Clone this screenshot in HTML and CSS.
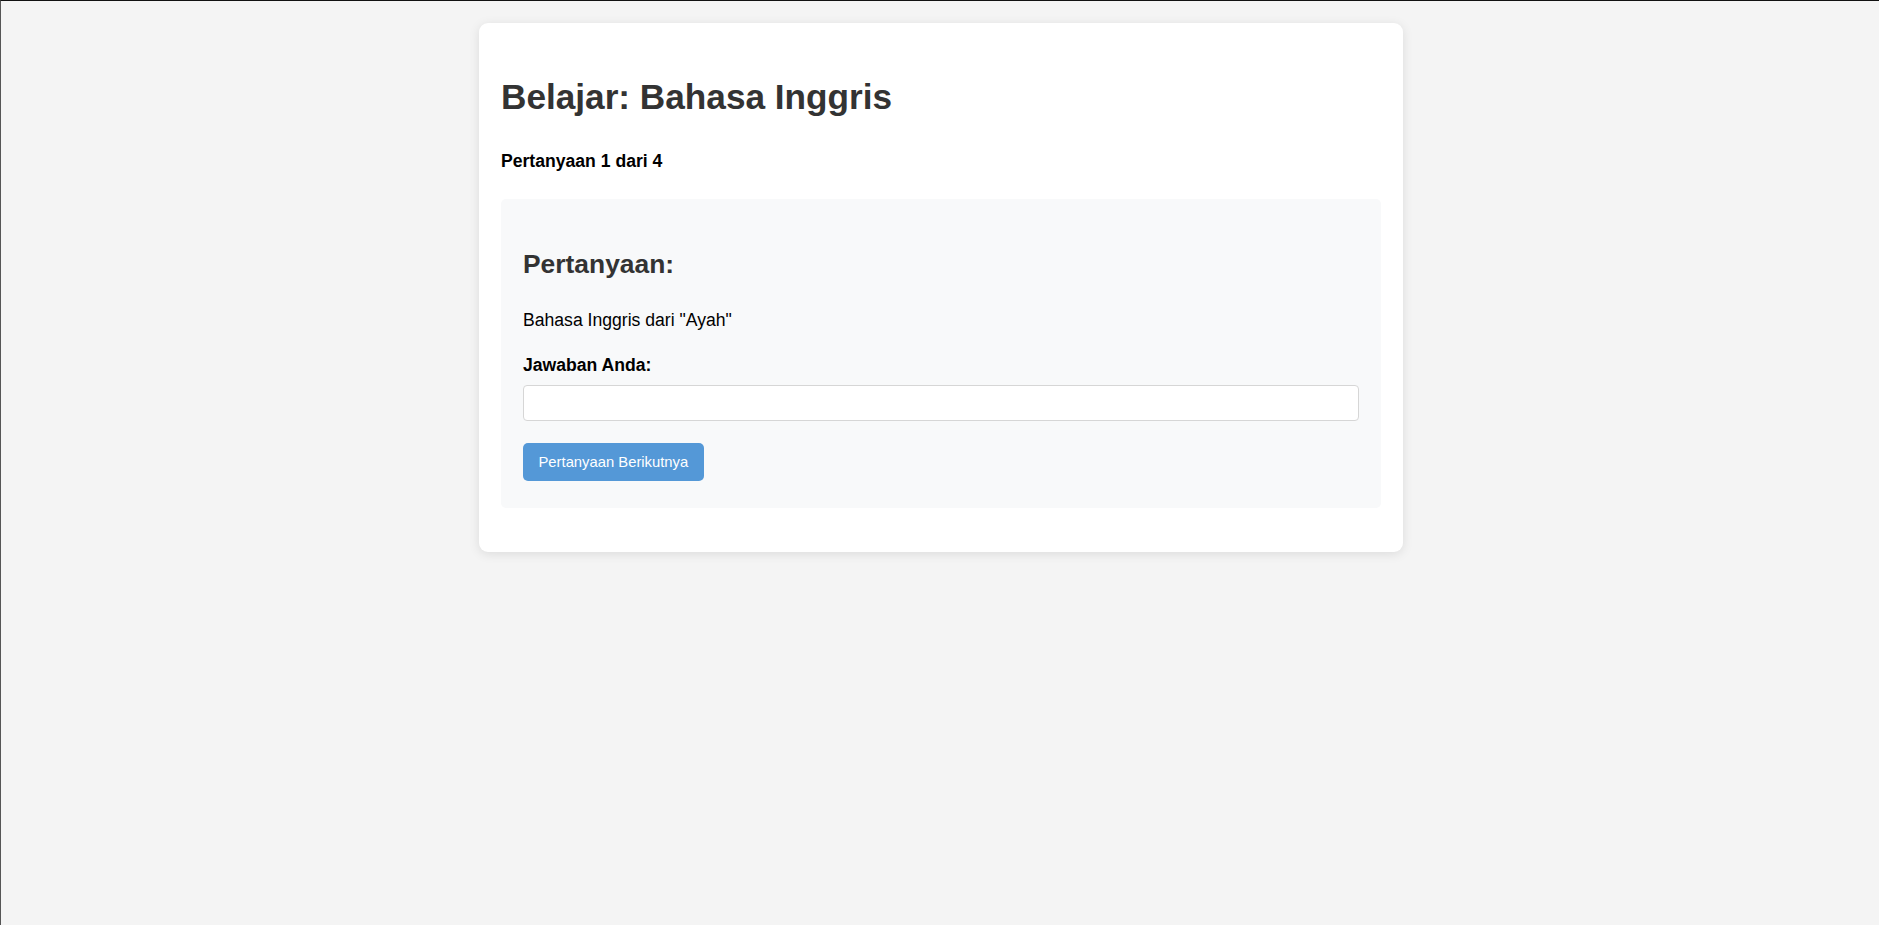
FILE: index.html
```html
<!DOCTYPE html>
<html lang="id">
<head>
<meta charset="utf-8">
<title>Belajar: Bahasa Inggris</title>
<link rel="stylesheet" href="styles.css">
</head>
<body>
<div class="card">
  <h1 class="title">Belajar: Bahasa Inggris</h1>
  <p class="progress">Pertanyaan 1 dari 4</p>
  <div class="question-box">
    <h2 class="q-heading">Pertanyaan:</h2>
    <p class="q-text">Bahasa Inggris dari "Ayah"</p>
    <label class="answer-label" for="jawaban">Jawaban Anda:</label>
    <input class="answer-input" id="jawaban" type="text">
    <button class="next-btn" type="button">Pertanyaan Berikutnya</button>
  </div>
</div>
</body>
</html>
```
FILE: styles.css
```css
html {
  box-sizing: border-box;
  height: 100%;
  border-top: 1px solid #111;
  border-left: 1px solid #555;
  background: #f4f4f4;
}
body {
  margin: 0;
  padding: 22px 0 22px 2px;
  font-family: "Liberation Sans", Arial, sans-serif;
  font-size: 17.6px;
  color: #000;
  background: #f4f4f4;
}
.card {
  width: 880px;
  margin: 0 auto;
  padding: 22px;
  background: #fff;
  border-radius: 9px;
  box-shadow: 0 2px 11px rgba(0, 0, 0, 0.1);
}
.title {
  margin: 32px 0 0;
  font-size: 35.2px;
  line-height: 40px;
  font-weight: bold;
  color: #333;
}
.progress {
  margin: 34px 0 0;
  font-size: 17.6px;
  line-height: 20px;
  font-weight: bold;
}
.question-box {
  margin: 28px 0 22px;
  padding: 22px 22px 27px;
  background: #f8f9fa;
  border-radius: 5px;
  display: flex;
  flex-direction: column;
  align-items: flex-start;
}
.q-heading {
  margin: 28px 0 0;
  font-size: 26.4px;
  line-height: 30px;
  font-weight: bold;
  color: #333;
}
.q-text {
  margin: 31px 0 0;
  line-height: 20px;
}
.answer-label {
  margin-top: 25px;
  line-height: 20px;
  font-weight: bold;
}
.answer-input {
  box-sizing: border-box;
  margin: 10px 0 0;
  width: 100%;
  height: 36px;
  padding: 0 10px;
  border: 1px solid #d6d6d6;
  border-radius: 4px;
  background: #fff;
  font-family: "Liberation Sans", Arial, sans-serif;
  font-size: 17.6px;
  outline: none;
}
.next-btn {
  box-sizing: border-box;
  margin-top: 22px;
  height: 38px;
  padding: 0 15.5px;
  border: none;
  border-radius: 5px;
  background: #5498d7;
  color: #fff;
  font-family: "Liberation Sans", Arial, sans-serif;
  font-size: 14.8px;
  cursor: pointer;
}
```
